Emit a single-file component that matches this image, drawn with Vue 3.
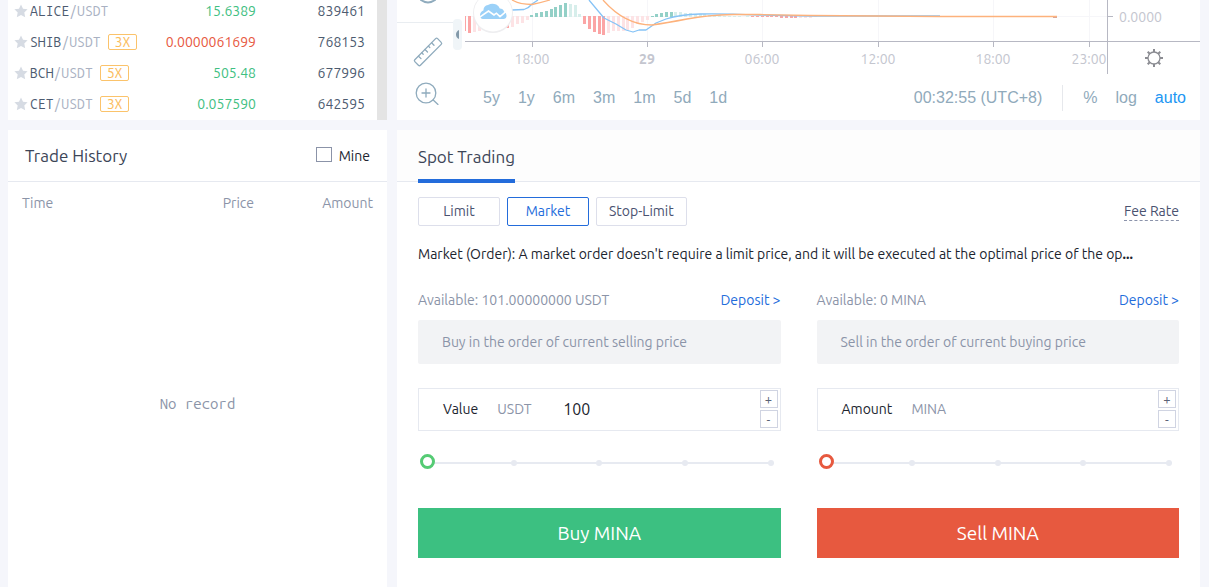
<script setup>
import { ref } from 'vue'

const pairs = [
  { base: 'ALICE', lever: '', price: '15.6389', up: true, volume: '839461' },
  { base: 'SHIB', lever: '3X', price: '0.0000061699', up: false, volume: '768153' },
  { base: 'BCH', lever: '5X', price: '505.48', up: true, volume: '677996' },
  { base: 'CET', lever: '3X', price: '0.057590', up: true, volume: '642595' },
]

const ranges = ['5y', '1y', '6m', '3m', '1m', '5d', '1d']

const ticks = [
  { x: 67, label: '18:00' },
  { x: 182, label: '29', bold: true },
  { x: 297, label: '06:00' },
  { x: 413, label: '12:00' },
  { x: 528, label: '18:00' },
  { x: 624, label: '23:00' },
]

// Histogram bars: x, top, bottom, tone
const bars = [
  [-2, 16, 31, 'red'], [3, 16, 33, 'red'], [8, 16, 32, 'pink'], [13, 16, 31, 'pink'],
  [18, 16, 30, 'pink'], [41, 16, 28, 'red'], [46, 16, 27, 'pink'], [51, 16, 24, 'pink'],
  [56, 16, 23, 'pink'], [61, 16, 20, 'pink'],
  [65, 15, 17, 'green'], [70, 13, 17, 'green'], [75, 12, 17, 'green'], [80, 11, 17, 'green'],
  [85, 9, 17, 'green'], [89, 7, 17, 'green'], [94, 5, 17, 'green'], [99, 3, 17, 'green'],
  [104, 4, 17, 'mint'], [109, 5, 17, 'mint'], [113, 14, 17, 'mint'],
  [118, 16, 24, 'red'], [123, 16, 29, 'red'], [128, 16, 32, 'red'], [133, 16, 34, 'red'],
  [137, 16, 35, 'red'], [142, 16, 33, 'pink'], [147, 16, 31, 'pink'], [152, 16, 31, 'pink'],
  [157, 16, 31, 'pink'], [161, 16, 30, 'pink'], [166, 16, 28, 'pink'], [171, 16, 24, 'pink'],
  [176, 16, 22, 'pink'], [181, 16, 20, 'pink'],
  [186, 16, 17, 'green'], [190, 14, 17, 'green'], [195, 13, 17, 'green'], [200, 12, 17, 'green'],
  [205, 12, 17, 'green'], [209, 12, 17, 'mint'], [214, 12, 17, 'mint'], [219, 13, 17, 'mint'],
  [224, 13, 17, 'mint'], [229, 14, 17, 'mint'], [234, 14, 17, 'mint'], [238, 14, 17, 'mint'],
  [243, 15, 17, 'mint'], [248, 15, 17, 'mint'], [253, 15, 17, 'mint'], [258, 16, 17, 'mint'],
  [263, 16, 17, 'mint'], [268, 16, 17, 'mint'], [273, 16, 17, 'mint'], [281, 16, 17, 'mint'],
  [286, 16, 17, 'red'], [291, 16, 17, 'red'], [296, 16, 17, 'red'], [301, 16, 17, 'red'],
  [305, 16, 17, 'red'], [310, 16, 17, 'red'], [315, 16, 18, 'red'], [320, 16, 18, 'red'],
  [325, 16, 18, 'red'], [329, 16, 18, 'red'], [334, 16, 18, 'pink'], [339, 16, 18, 'pink'],
  [344, 16, 18, 'pink'], [349, 16, 17, 'pink'],
]

const modes = ['Limit', 'Market', 'Stop-Limit']
const mode = ref('Market')
const mine = ref(false)
const forms = ref([
  {
    id: 'buy', available: 'Available: 101.00000000 USDT', hint: 'Buy in the order of current selling price',
    label: 'Value', unit: 'USDT', value: '100', percent: 0, action: 'Buy MINA',
  },
  {
    id: 'sell', available: 'Available: 0 MINA', hint: 'Sell in the order of current buying price',
    label: 'Amount', unit: 'MINA', value: '', percent: 0, action: 'Sell MINA',
  },
])

function step(form, delta) {
  form.value = String(Math.max(0, Number(form.value || 0) + delta))
}
</script>

<template>
  <main class="page">
    <section class="panel market">
      <table class="pairs">
        <tbody>
          <tr v-for="p in pairs" :key="p.base">
            <td class="pair">
              <div class="pair-line">
                <svg class="star" viewBox="0 0 14 14" aria-hidden="true">
                  <path d="M7 0.6 9 4.7 13.6 5.2 10.3 8.4 11.2 13.2 7 11 2.8 13.2 3.7 8.4 0.4 5.2 5 4.7Z" />
                </svg>
                <span class="base">{{ p.base }}</span><span class="quote">/USDT</span>
                <span v-if="p.lever" class="lever">{{ p.lever }}</span>
              </div>
            </td>
            <td class="price" :class="p.up ? 'up' : 'down'">{{ p.price }}</td>
            <td class="volume">{{ p.volume }}</td>
          </tr>
        </tbody>
      </table>
      <div class="scrollbar"></div>
    </section>

    <section class="panel chart">
      <div class="tools">
        <svg class="tool-art" width="68" height="120" viewBox="0 0 68 120" aria-hidden="true">
          <g fill="none" stroke="#8fabbd" stroke-width="1.3" stroke-linecap="round" stroke-linejoin="round">
            <path d="M24 0Q31 5 38 0" stroke-width="2" />
            <path d="M17.8 59.8 38.6 38.6Q39.6 37.6 40.6 38.6L44.2 42.4Q45.2 43.4 44.2 44.4L23.4 65.2Q22.4 66.2 21.4 65.2L17.8 61.6Q16.9 60.7 17.8 59.8Z" />
            <path d="M21.5 56.2 24 58.6M24.8 52.8 26.2 54.2M28 49.5 30.5 52M31.4 46.1 32.8 47.5M34.6 42.8 37 45.2" />
            <circle cx="29" cy="93" r="9.8" />
            <path d="M36.2 100 41 104.4M25 93H33M29 89V97" />
          </g>
          <path d="M0 22.5H56" stroke="#e9edf1" />
          <rect x="56" y="19" width="9" height="31" rx="4" fill="#f0f5f8" />
          <path d="M62 30V39Q59 37.5 59 34.5T62 30Z" fill="#8299a9" />
        </svg>
      </div>
      <div class="chart-main">
        <svg class="plot" width="735" height="76" viewBox="0 0 735 76">
          <g stroke="#f6f6f9">
            <path d="M67.5 0V41M182.5 0V41M297.5 0V41M413.5 0V41M528.5 0V41M624.5 0V41M0 16.5H642" />
          </g>
          <rect v-for="(b, i) in bars" :key="i" :x="b[0]" :y="b[1]" width="3" :height="b[2] - b[1]" :class="b[3]" />
          <g fill="none" stroke-width="1.3" stroke-linejoin="round">
            <path stroke="#86c3f6" d="M47 10 59 9.5Q64 8 67 4L73 0M124 0 139 18 151 24 161 30 168 32 174 30 181 30 191 23 201 19Q215 14.5 235 14T295 15L345 16H475" />
            <path stroke="#fdb27c" d="M47 0Q55 4.5 67 4.5 75 3 85 0M138 0Q160 25 187 25 201 23 222 19T268 14.5H295L345 15.5 475 16.5H592" />
          </g>
          <path d="M588 17.5H592" stroke="#d8a79a" />
          <circle cx="28" cy="13" r="20" fill="#eeeef0" />
          <circle cx="28" cy="12.5" r="19" fill="#fff" />
          <path d="M18 19Q15 18.6 15 15.5 15 12 18.4 10.6 18.6 5.5 23 5 27 2.6 31.3 4.6 34 6 34.8 8.4 38.2 8.4 39 11.6 41.7 13 41.6 16 41.2 18.8 38.4 19Z" fill="#9bd1f8" />
          <path d="M14 17.6 23.5 11 29 15 31.4 13.2 35 16.6 41.5 11.2" fill="none" stroke="#fff" stroke-width="1.6" />
          <path d="M0 41.5H735M642.5 0V74M642 16.5H648" stroke="#b7b8c3" />
          <path v-for="t in ticks" :key="'k' + t.x" :d="`M${t.x}.5 41V47`" stroke="#b7b8c3" />
          <text v-for="t in ticks" :key="'t' + t.x" :x="t.x" y="64" text-anchor="middle" :class="{ bold: t.bold }">{{ t.label }}</text>
          <text x="654" y="22">0.0000</text>
          <g fill="none" stroke="#8b8c92" stroke-width="1.3">
            <circle cx="689" cy="58" r="6" />
            <path d="M689 49V52M689 64V67M680 58H683M695 58H698M682.7 51.7 684.8 53.8M693.2 62.2 695.3 64.3M682.7 64.3 684.8 62.2M693.2 53.8 695.3 51.7" stroke-width="2" />
          </g>
        </svg>
        <div class="chart-bar">
          <div class="ranges">
            <button v-for="r in ranges" :key="r" type="button">{{ r }}</button>
          </div>
          <div class="scale">
            <button type="button">00:32:55 (UTC+8)</button>
            <i class="rule"></i>
            <button type="button">%</button>
            <button type="button">log</button>
            <button type="button" class="on">auto</button>
          </div>
        </div>
      </div>
    </section>

    <section class="panel history">
      <header class="head">
        <h2>Trade History</h2>
        <label class="mine"><input v-model="mine" type="checkbox" />Mine</label>
      </header>
      <table class="trades">
        <thead>
          <tr><th class="time">Time</th><th>Price</th><th>Amount</th></tr>
        </thead>
      </table>
      <p class="empty">No record</p>
    </section>

    <section class="panel trading">
      <header class="head tabs">
        <h2 class="tab">Spot Trading</h2>
      </header>
      <div class="body">
        <div class="modes">
          <button v-for="m in modes" :key="m" type="button" :class="{ active: m === mode }" @click="mode = m">{{ m }}</button>
          <a href="#" class="fee">Fee Rate</a>
        </div>
        <p class="about">Market (Order): A market order doesn't require a limit price, and it will be executed at the optimal price of the op<b>...</b></p>
        <div class="forms">
          <form v-for="f in forms" :key="f.id" :class="f.id" @submit.prevent>
            <div class="funds"><span>{{ f.available }}</span><a href="#">Deposit &gt;</a></div>
            <div class="hint">{{ f.hint }}</div>
            <div class="field">
              <label :for="f.id + '-value'">{{ f.label }}</label>
              <span class="unit">{{ f.unit }}</span>
              <input :id="f.id + '-value'" v-model="f.value" type="text" />
              <div class="steps">
                <button type="button" aria-label="Increase" @click="step(f, 1)">+</button>
                <button type="button" aria-label="Decrease" @click="step(f, -1)">-</button>
              </div>
            </div>
            <div class="slider">
              <div class="track"><i v-for="n in 5" :key="n"></i></div>
              <input v-model="f.percent" type="range" min="0" max="100" :aria-label="f.label + ' percent'" />
            </div>
            <button class="submit" type="submit">{{ f.action }}</button>
          </form>
        </div>
      </div>
    </section>
  </main>
</template>

<style>
body {
  background: #f5f6fb;
}
</style>

<style scoped>
* {
  box-sizing: border-box;
}
.page {
  min-height: 100vh;
  display: grid;
  grid-template-columns: 379px minmax(0, 1fr);
  grid-template-rows: 120px 1fr;
  gap: 10px;
  padding: 0 9px 0 8px;
  font: 14px/20px Ubuntu, "Noto Sans", sans-serif;
  color: #20242e;
}
.panel {
  background: #fff;
  overflow: hidden;
}
button {
  font: inherit;
  padding: 0;
  border: 0;
  background: none;
  color: inherit;
  cursor: pointer;
}
h2, p {
  margin: 0;
  font-weight: 400;
}
a {
  text-decoration: none;
}

.market {
  display: flex;
  align-items: flex-end;
}
.pairs {
  flex: 1;
  margin-bottom: 1px;
  border-collapse: collapse;
}
.pairs td {
  height: 31px;
  padding: 0;
}
.pair-line {
  display: flex;
  align-items: center;
  padding-left: 6px;
  font-family: "Ubuntu Mono", "DejaVu Sans Mono", monospace;
}
.star {
  width: 14px;
  height: 14px;
  margin-right: 2px;
  fill: #d6dbe3;
}
.base {
  color: #4d5b70;
}
.quote {
  color: #a9b1c2;
}
.lever {
  margin-left: 7px;
  padding: 0 6px;
  border: 1px solid #fbc36b;
  border-radius: 2px;
  line-height: 14px;
  color: #fbbd5e;
}
.price {
  text-align: right;
}
.up {
  color: #3fc082;
}
.down {
  color: #e7593f;
}
.pairs .volume {
  width: 121px;
  padding-right: 12px;
  text-align: right;
  color: #4d5b70;
}
.scrollbar {
  align-self: stretch;
  width: 10px;
  background: #e4e4e4;
}

.chart {
  display: flex;
}
.tools {
  flex: none;
}
.tool-art, .plot {
  display: block;
}
.chart-main {
  flex: 1;
  min-width: 0;
}
.plot text {
  font-size: 14px;
  fill: #c4c6cf;
}
.plot .bold {
  font-weight: 700;
}
.red { fill: #fba5a5; }
.pink { fill: #fde3e5; }
.green { fill: #93d0c7; }
.mint { fill: #d7eeeb; }
.chart-bar {
  display: flex;
  justify-content: space-between;
  align-items: center;
  height: 44px;
  padding: 0 14px 0 18px;
  font: 16px/20px "Liberation Sans", Arial, sans-serif;
  color: #90aabb;
}
.ranges {
  display: flex;
  gap: 18px;
}
.scale {
  display: flex;
  align-items: center;
  gap: 18px;
}
.rule {
  width: 1px;
  height: 26px;
  margin: 0 2px;
  background: #e6e8ec;
}
.on {
  color: #2196f3;
}

.head {
  display: flex;
  justify-content: space-between;
  align-items: center;
  height: 52px;
  border-bottom: 1px solid #e6e9f0;
  padding: 0 17px;
}
.head h2 {
  font-size: 17px;
  color: #3c4557;
}
.mine {
  display: flex;
  align-items: center;
  gap: 7px;
}
.mine input {
  appearance: none;
  width: 16px;
  height: 15px;
  margin: 0 0 2px;
  border: 1px solid #8b93a8;
  background: #fff;
}
.mine input:checked {
  background: #236cdb;
}
.history {
  display: flex;
  flex-direction: column;
}
.trades {
  margin: 11px 14px 0;
  border-collapse: collapse;
}
.trades th {
  padding: 0;
  width: 119px;
  font-weight: 400;
  text-align: right;
  color: #8b94a8;
}
.trades .time {
  width: auto;
  text-align: left;
}
.empty {
  margin-top: 181px;
  text-align: center;
  font: 15px/20px "Ubuntu Mono", "DejaVu Sans Mono", monospace;
  color: #8b94a8;
}

.tabs {
  background: #fdfdfd;
  padding: 0 21px;
}
.trading {
  overflow: visible;
}
.head .tab {
  display: flex;
  align-items: center;
  align-self: flex-start;
  flex: none;
  height: 53px;
  padding-top: 5px;
  border-bottom: 4px solid #236cdb;
}
.body {
  padding: 15px 21px 29px;
}
.modes {
  display: flex;
  gap: 7px;
}
.modes button {
  min-width: 82px;
  height: 29px;
  padding: 0 12px 2px;
  border: 1px solid #dddfeb;
  border-radius: 2px;
  color: #4a5270;
}
.modes .active {
  border-color: #236cdb;
  color: #236cdb;
}
.fee {
  margin-left: auto;
  align-self: center;
  line-height: 18px;
  border-bottom: 1px dashed #8b93ab;
  color: #4a5270;
}
.about {
  margin-top: 18px;
  white-space: nowrap;
}
.forms {
  display: grid;
  grid-template-columns: repeat(2, minmax(0, 1fr));
  gap: 36px;
  margin-top: 26px;
}
.funds {
  display: flex;
  justify-content: space-between;
  color: #8b94a8;
}
.funds a {
  color: #236cdb;
}
.hint {
  margin-top: 10px;
  padding: 12px 24px;
  border-radius: 2px;
  background: #f2f3f5;
  color: #8b94a8;
}
.field {
  display: flex;
  align-items: center;
  height: 43px;
  margin-top: 24px;
  padding: 0 2px 2px 24px;
  border: 1px solid #e6e9f0;
}
.unit {
  width: 66px;
  flex: none;
  margin-left: 19px;
  color: #8b94a8;
}
.field input {
  flex: 1;
  min-width: 0;
  padding: 0;
  border: 0;
  outline: 0;
  background: none;
  font: inherit;
  font-size: 16px;
  color: #20242e;
}
.steps {
  display: grid;
  flex: none;
  gap: 2px;
}
.steps button {
  width: 18px;
  height: 18px;
  border: 1px solid #d0d4e2;
  font-size: 13px;
  line-height: 14px;
  color: #5a6275;
}
.slider {
  position: relative;
  height: 16px;
  margin: 23px 0 38px;
  padding: 6px 7px 0;
}
.track {
  display: flex;
  justify-content: space-between;
  background: linear-gradient(#e7eaf1, #e7eaf1) center / 100% 2px no-repeat;
}
.track i {
  width: 6px;
  height: 6px;
  border-radius: 3px;
  background: #e7eaf1;
}
.slider input {
  position: absolute;
  inset: 0 2px;
  width: calc(100% - 4px);
  height: 15px;
  margin: 0;
  appearance: none;
  background: none;
}
.slider input::-webkit-slider-thumb {
  appearance: none;
  width: 15px;
  height: 15px;
  border: 3px solid #55cb74;
  border-radius: 50%;
  background: #fff;
}
.sell .slider input::-webkit-slider-thumb {
  border-color: #e7593f;
}
.submit {
  display: block;
  width: 100%;
  height: 50px;
  background: #3cc081;
  color: #fff;
  font-size: 19px;
}
.sell .submit {
  background: #e7593f;
}
</style>
